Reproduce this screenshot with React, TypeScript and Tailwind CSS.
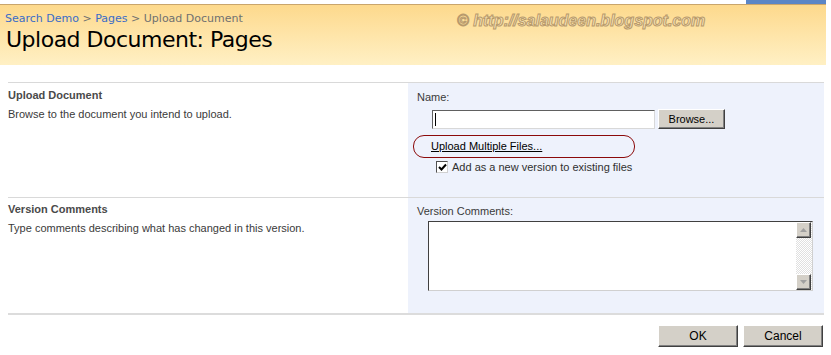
import React from 'react';

// classic 3D bevel used by the form buttons
const bevel =
  'border border-t-white border-l-white border-r-[#404040] border-b-[#404040] shadow-[inset_-1px_-1px_0_#808080] bg-[#d4d0c8]';

const ScrollArrow = ({ up }: { up?: boolean }) => (
  <div className={`flex h-[16px] w-[15px] items-center justify-center ${bevel}`}>
    <svg width="7" height="4" viewBox="0 0 7 4">
      <path d={up ? 'M0 4 L3.5 0 L7 4 Z' : 'M0 0 L3.5 4 L7 0 Z'} fill="#a0a0a0" />
    </svg>
  </div>
);

export default function App() {
  return (
    <div className="h-[355px] w-[831px] overflow-hidden bg-white font-['Liberation_Sans',Tahoma,sans-serif] text-[11px] text-[#3a3a3a]">
      {/* Header */}
      <div className="w-[826px]">
        <div className="flex h-[4px]">
          <div className="flex-1 bg-white" />
          <div className="w-[80px] bg-[#5b86c6]" />
        </div>
        <div className="relative h-[61px] border-t border-t-[#c9a56c] bg-gradient-to-b from-[#fdd98c] to-[#fff0c4] px-[5px] pt-[7px]">
          <div className="font-['DejaVu_Sans',Verdana,sans-serif] text-[11px] leading-[14px] text-[#707070]">
            <span className="text-[#3a6cc8]">Search Demo</span>
            {' > '}
            <span className="text-[#3a6cc8]">Pages</span>
            {' > Upload Document'}
          </div>
          <div className="mt-[1px] pl-[1px] font-['DejaVu_Sans',Verdana,sans-serif] text-[22px] leading-[26px] tracking-[-0.5px] text-black">
            Upload Document: Pages
          </div>
          <div className="absolute left-[457px] top-[4px] font-['Liberation_Sans',sans-serif] text-[16px] font-bold italic text-[#f6e2b4] [-webkit-text-stroke:1px_#b89a6c]">
            © http://salaudeen.blogspot.com
          </div>
        </div>
      </div>

      {/* Form */}
      <div className="ml-[8px] mt-[17px] w-[816px]">
        <div className="flex h-[115px] border-t border-[#d9d9d9]">
          <div className="w-[400px] pt-[5px]">
            <div className="font-bold text-[11px] leading-[14px] text-[#4a4a4a]">Upload Document</div>
            <div className="mt-[5px] leading-[14px]">Browse to the document you intend to upload.</div>
          </div>
          <div className="flex-1 bg-[#eef2fc] pl-[9px] pt-[7px]">
            <div className="leading-[14px]">Name:</div>
            <div className="ml-[15px] mt-[5px] flex items-center gap-[3px]">
              <div className="flex h-[19px] w-[223px] items-center border border-t-[#606060] border-l-[#606060] border-r-[#d8d8d8] border-b-[#d8d8d8] bg-white pl-[2px]">
                <span className="h-[13px] w-[1px] bg-black" />
              </div>
              <button className={`h-[20px] w-[67px] text-[11px] text-black ${bevel}`}>Browse...</button>
            </div>
            <div className="-ml-[4px] mt-[6px] flex h-[23px] w-[222px] items-center rounded-[11px] border border-[#8b0a0a] pl-[17px]">
              <span className="text-black underline">Upload Multiple Files...</span>
            </div>
            <div className="ml-[19px] mt-[2px] flex items-center gap-[4px]">
              <div className="flex h-[12px] w-[12px] items-center justify-center border border-t-[#505050] border-l-[#505050] border-r-[#d0d0d0] border-b-[#d0d0d0] bg-white">
                <svg width="9" height="8" viewBox="0 0 9 8">
                  <path d="M1 4 L3.5 6.5 L8 1.5" stroke="#000" strokeWidth="2" fill="none" />
                </svg>
              </div>
              <span className="text-[11px] leading-[14px] text-[#303030]">Add as a new version to existing files</span>
            </div>
          </div>
        </div>

        <div className="flex h-[116px] border-t border-[#d9d9d9]">
          <div className="w-[400px] pt-[4px]">
            <div className="font-bold text-[11px] leading-[14px] text-[#4a4a4a]">Version Comments</div>
            <div className="mt-[5px] leading-[14px]">Type comments describing what has changed in this version.</div>
          </div>
          <div className="flex-1 bg-[#eef2fc] pl-[9px] pt-[6px]">
            <div className="leading-[14px]">Version Comments:</div>
            <div className="ml-[11px] mt-[3px] flex h-[70px] w-[385px] border border-t-[#404040] border-l-[#404040] border-r-[#d0d0d0] border-b-[#d0d0d0] bg-white">
              <div className="flex-1" />
              <div className="flex w-[16px] flex-col bg-[repeating-conic-gradient(#e0e0e0_0%_25%,#ffffff_0%_50%)] bg-[length:2px_2px]">
                <ScrollArrow up />
                <div className="flex-1" />
                <ScrollArrow />
              </div>
            </div>
          </div>
        </div>

        <div className="border-t-2 border-[#dcdcdc]" />

        <div className="mt-[10px] flex justify-end gap-[5px] pr-[1px]">
          <button className={`h-[22px] w-[80px] text-[12px] text-black ${bevel}`}>OK</button>
          <button className={`h-[22px] w-[80px] text-[12px] text-black ${bevel}`}>Cancel</button>
        </div>
      </div>
    </div>
  );
}
